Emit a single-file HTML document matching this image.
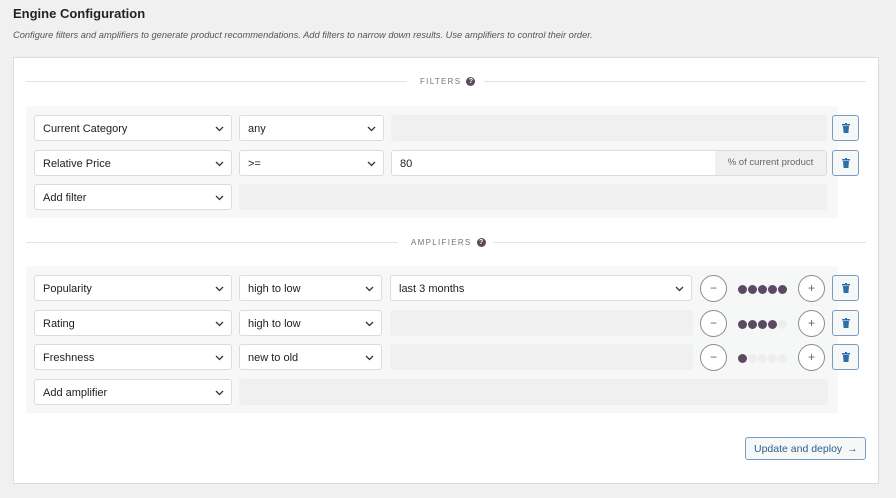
<!DOCTYPE html>
<html><head><style>
*{box-sizing:border-box;margin:0;padding:0}
body{width:896px;height:498px;background:#f0f0f1;font-family:"Liberation Sans",sans-serif;color:#1e1e1e;position:relative;overflow:hidden}
.a{position:absolute}
h1{position:absolute;left:13px;top:6px;font-size:13px;font-weight:bold;color:#1d2327}
.sub{left:13px;top:30px;font-size:9.3px;font-style:italic;color:#50575e}
.panel{left:13px;top:57px;width:866px;height:427px;background:#fff;border:1px solid #dcdcde}
.line{height:1px;background:#e4e4e4}
.lbl{font-size:8px;letter-spacing:1.3px;color:#757575}
.q{display:inline-block;width:9px;height:9px;border-radius:50%;background:#5c4a5c;color:#fff;font-size:7px;text-align:center;line-height:9px;font-weight:bold;letter-spacing:0;vertical-align:middle;margin-left:5px}
.box{background:#f6f7f7}
.sel{background:#fff;border:1px solid #dcdcde;border-radius:3px;height:26px;font-size:11px;line-height:26px;padding-left:8px;color:#1e1e1e}
.sel svg{position:absolute;right:7px;top:10px}
.grey{background:#f0f0f0;border-radius:3px;height:26px}
.tr{width:27px;height:26px;border:1px solid #7b9cc0;border-radius:3px;background:#f6f7f7}
.tr svg{position:absolute;left:9px;top:7px}
.c{width:27px;height:27px;border:1px solid #8c8c8c;border-radius:50%;background:#fff;text-align:center;line-height:25px;font-size:12px;color:#666}
.dots{font-size:0}
.dots i{display:inline-block;width:9px;height:9px;border-radius:50%;background:#5b4a62;margin-right:1px}
.dots i.o{background:#eeeeee}
.btn{left:745px;top:437px;width:121px;height:23px;border:1px solid #7b9cc0;border-radius:3px;background:#f6f7f7;color:#2c5f8f;font-size:10.5px;line-height:22px;padding-left:8px;white-space:nowrap}
</style></head><body>
<h1>Engine Configuration</h1>
<div class="a sub">Configure filters and amplifiers to generate product recommendations. Add filters to narrow down results. Use amplifiers to control their order.</div>
<div class="a panel"></div>

<div class="a line" style="left:26px;top:81px;width:381px"></div>
<div class="a line" style="left:484px;top:81px;width:382px"></div>
<div class="a lbl" style="left:420px;top:77px">FILTERS<span class="q">?</span></div>

<div class="a box" style="left:26px;top:106px;width:812px;height:112px"></div>

<div class="a sel" style="left:34px;top:115px;width:198px">Current Category<svg width="9" height="6" viewBox="0 0 9 6"><path d="M1 1l3.5 3.5L8 1" fill="none" stroke="#333" stroke-width="1.3"/></svg></div>
<div class="a sel" style="left:239px;top:115px;width:145px">any<svg width="9" height="6" viewBox="0 0 9 6"><path d="M1 1l3.5 3.5L8 1" fill="none" stroke="#333" stroke-width="1.3"/></svg></div>
<div class="a grey" style="left:391px;top:115px;width:436px"></div>
<div class="a tr" style="left:832px;top:115px"><svg width="8" height="10" viewBox="0 0 8 10"><rect x="0" y="1" width="8" height="1.5" fill="#2b6ea8"/><rect x="3" y="0" width="2" height="1.5" fill="#2b6ea8"/><path d="M1 3h6l-.6 7H1.6z" fill="#2b6ea8"/></svg></div>

<div class="a sel" style="left:34px;top:150px;width:198px">Relative Price<svg width="9" height="6" viewBox="0 0 9 6"><path d="M1 1l3.5 3.5L8 1" fill="none" stroke="#333" stroke-width="1.3"/></svg></div>
<div class="a sel" style="left:239px;top:150px;width:145px">&gt;=<svg width="9" height="6" viewBox="0 0 9 6"><path d="M1 1l3.5 3.5L8 1" fill="none" stroke="#333" stroke-width="1.3"/></svg></div>
<div class="a sel" style="left:391px;top:150px;width:436px">80</div>
<div class="a" style="left:715px;top:151px;width:111px;height:24px;background:#f0f0f0;font-size:9.5px;color:#666;line-height:24px;text-align:center">% of current product</div>
<div class="a tr" style="left:832px;top:150px"><svg width="8" height="10" viewBox="0 0 8 10"><rect x="0" y="1" width="8" height="1.5" fill="#2b6ea8"/><rect x="3" y="0" width="2" height="1.5" fill="#2b6ea8"/><path d="M1 3h6l-.6 7H1.6z" fill="#2b6ea8"/></svg></div>

<div class="a sel" style="left:34px;top:184px;width:198px">Add filter<svg width="9" height="6" viewBox="0 0 9 6"><path d="M1 1l3.5 3.5L8 1" fill="none" stroke="#333" stroke-width="1.3"/></svg></div>
<div class="a grey" style="left:239px;top:184px;width:588px"></div>

<div class="a line" style="left:26px;top:242px;width:372px"></div>
<div class="a line" style="left:493px;top:242px;width:373px"></div>
<div class="a lbl" style="left:411px;top:238px">AMPLIFIERS<span class="q">?</span></div>

<div class="a box" style="left:26px;top:266px;width:812px;height:147px"></div>

<div class="a sel" style="left:34px;top:275px;width:198px">Popularity<svg width="9" height="6" viewBox="0 0 9 6"><path d="M1 1l3.5 3.5L8 1" fill="none" stroke="#333" stroke-width="1.3"/></svg></div>
<div class="a sel" style="left:239px;top:275px;width:143px">high to low<svg width="9" height="6" viewBox="0 0 9 6"><path d="M1 1l3.5 3.5L8 1" fill="none" stroke="#333" stroke-width="1.3"/></svg></div>
<div class="a sel" style="left:390px;top:275px;width:302px">last 3 months<svg width="9" height="6" viewBox="0 0 9 6"><path d="M1 1l3.5 3.5L8 1" fill="none" stroke="#333" stroke-width="1.3"/></svg></div>
<div class="a c" style="left:700px;top:275px">−</div>
<div class="a dots" style="left:738px;top:285px"><i></i><i></i><i></i><i></i><i></i></div>
<div class="a c" style="left:798px;top:275px">+</div>
<div class="a tr" style="left:832px;top:275px"><svg width="8" height="10" viewBox="0 0 8 10"><rect x="0" y="1" width="8" height="1.5" fill="#2b6ea8"/><rect x="3" y="0" width="2" height="1.5" fill="#2b6ea8"/><path d="M1 3h6l-.6 7H1.6z" fill="#2b6ea8"/></svg></div>

<div class="a sel" style="left:34px;top:310px;width:198px">Rating<svg width="9" height="6" viewBox="0 0 9 6"><path d="M1 1l3.5 3.5L8 1" fill="none" stroke="#333" stroke-width="1.3"/></svg></div>
<div class="a sel" style="left:239px;top:310px;width:143px">high to low<svg width="9" height="6" viewBox="0 0 9 6"><path d="M1 1l3.5 3.5L8 1" fill="none" stroke="#333" stroke-width="1.3"/></svg></div>
<div class="a grey" style="left:390px;top:310px;width:303px"></div>
<div class="a c" style="left:700px;top:310px">−</div>
<div class="a dots" style="left:738px;top:320px"><i></i><i></i><i></i><i></i><i class="o"></i></div>
<div class="a c" style="left:798px;top:310px">+</div>
<div class="a tr" style="left:832px;top:310px"><svg width="8" height="10" viewBox="0 0 8 10"><rect x="0" y="1" width="8" height="1.5" fill="#2b6ea8"/><rect x="3" y="0" width="2" height="1.5" fill="#2b6ea8"/><path d="M1 3h6l-.6 7H1.6z" fill="#2b6ea8"/></svg></div>

<div class="a sel" style="left:34px;top:344px;width:198px">Freshness<svg width="9" height="6" viewBox="0 0 9 6"><path d="M1 1l3.5 3.5L8 1" fill="none" stroke="#333" stroke-width="1.3"/></svg></div>
<div class="a sel" style="left:239px;top:344px;width:143px">new to old<svg width="9" height="6" viewBox="0 0 9 6"><path d="M1 1l3.5 3.5L8 1" fill="none" stroke="#333" stroke-width="1.3"/></svg></div>
<div class="a grey" style="left:390px;top:344px;width:303px"></div>
<div class="a c" style="left:700px;top:344px">−</div>
<div class="a dots" style="left:738px;top:354px"><i></i><i class="o"></i><i class="o"></i><i class="o"></i><i class="o"></i></div>
<div class="a c" style="left:798px;top:344px">+</div>
<div class="a tr" style="left:832px;top:344px"><svg width="8" height="10" viewBox="0 0 8 10"><rect x="0" y="1" width="8" height="1.5" fill="#2b6ea8"/><rect x="3" y="0" width="2" height="1.5" fill="#2b6ea8"/><path d="M1 3h6l-.6 7H1.6z" fill="#2b6ea8"/></svg></div>

<div class="a sel" style="left:34px;top:379px;width:198px">Add amplifier<svg width="9" height="6" viewBox="0 0 9 6"><path d="M1 1l3.5 3.5L8 1" fill="none" stroke="#333" stroke-width="1.3"/></svg></div>
<div class="a grey" style="left:239px;top:379px;width:589px"></div>

<div class="a btn">Update and deploy <span style="margin-left:2px">→</span></div>
</body></html>
